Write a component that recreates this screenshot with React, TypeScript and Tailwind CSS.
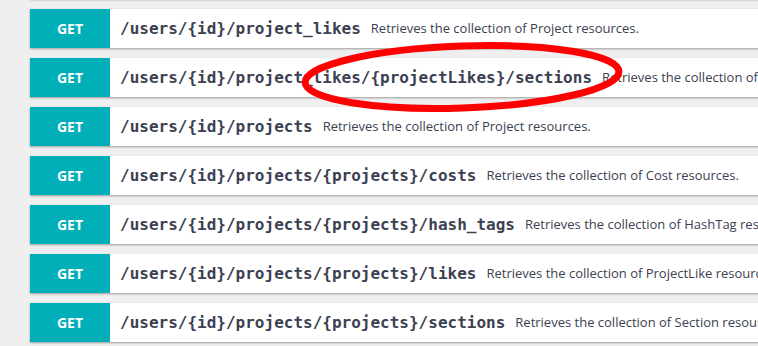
import React from "react";

const rows = [
  { path: "/users/{id}/project_likes", desc: "Retrieves the collection of Project resources." },
  { path: "/users/{id}/project_likes/{projectLikes}/sections", desc: "Retrieves the collection of Section resources." },
  { path: "/users/{id}/projects", desc: "Retrieves the collection of Project resources." },
  { path: "/users/{id}/projects/{projects}/costs", desc: "Retrieves the collection of Cost resources." },
  { path: "/users/{id}/projects/{projects}/hash_tags", desc: "Retrieves the collection of HashTag resources." },
  { path: "/users/{id}/projects/{projects}/likes", desc: "Retrieves the collection of ProjectLike resources." },
  { path: "/users/{id}/projects/{projects}/sections", desc: "Retrieves the collection of Section resources." },
];

function Row({ path, desc }: { path: string; desc: string }) {
  return (
    <div className="flex h-[39px] w-[900px] shrink-0 items-center bg-white shadow-[0_1px_2px_rgba(0,0,0,0.35)]">
      <div className="flex h-full w-[80px] shrink-0 items-center justify-center bg-[#00afb8] font-['Open_Sans',sans-serif] text-[14px] font-bold text-white">
        GET
      </div>
      <div className="ml-[10px] whitespace-nowrap font-['DejaVu_Sans_Mono',monospace] text-[16px] font-bold text-[#3b4151]">
        {path}
      </div>
      <div className="ml-[10px] whitespace-nowrap font-['Open_Sans',sans-serif] text-[13px] text-[#3b4151]">
        {desc}
      </div>
    </div>
  );
}

export default function App() {
  return (
    <div className="relative h-[346px] w-[758px] overflow-hidden bg-[#efefef]">
      <div className="flex flex-col gap-[10px] pl-[30px]">
        <div className="mt-[-40px] h-[39px] w-[900px] shrink-0 bg-white shadow-[0_1px_2px_rgba(0,0,0,0.35)]" />
        {rows.map((r, i) => (
          <Row key={i} path={r.path} desc={r.desc} />
        ))}
      </div>
      <svg className="pointer-events-none absolute left-0 top-0" width="758" height="346">
        <ellipse
          cx="462"
          cy="77"
          rx="157"
          ry="31"
          transform="rotate(-2 462 77)"
          fill="none"
          stroke="#ff0000"
          strokeWidth="7"
        />
      </svg>
    </div>
  );
}
